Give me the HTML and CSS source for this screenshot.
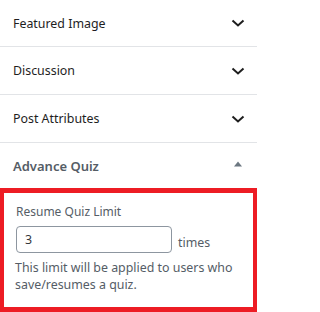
FILE: index.html
```html
<!DOCTYPE html>
<html>
<head>
<meta charset="utf-8">
<link rel="stylesheet" href="styles.css">
</head>
<body>
<div class="sidebar">
  <div class="panel first">
    <span class="title">Featured Image</span>
    <svg class="chev" width="14" height="8" viewBox="0 0 14 8"><path d="M1.5 1.5 L7 6.5 L12.5 1.5" fill="none" stroke="#1e1e1e" stroke-width="2"/></svg>
  </div>
  <div class="panel">
    <span class="title">Discussion</span>
    <svg class="chev" width="14" height="8" viewBox="0 0 14 8"><path d="M1.5 1.5 L7 6.5 L12.5 1.5" fill="none" stroke="#1e1e1e" stroke-width="2"/></svg>
  </div>
  <div class="panel">
    <span class="title">Post Attributes</span>
    <svg class="chev" width="14" height="8" viewBox="0 0 14 8"><path d="M1.5 1.5 L7 6.5 L12.5 1.5" fill="none" stroke="#1e1e1e" stroke-width="2"/></svg>
  </div>
  <div class="panel open">
    <span class="title quiz">Advance Quiz</span>
    <svg class="tri" width="8" height="6" viewBox="0 0 8 6"><path d="M0 5.5 L4 0.5 L8 5.5 Z" fill="#6c7781"/></svg>
  </div>
  <div class="box">
    <div class="label">Resume Quiz Limit</div>
    <div class="field">
      <input class="num" type="text" value="3">
      <span class="unit">times</span>
    </div>
    <p class="help">This limit will be applied to users who save/resumes a quiz.</p>
  </div>
</div>
</body>
</html>
```

FILE: styles.css
```css
html, body {
  margin: 0;
  padding: 0;
  background: #fff;
}
body {
  font-family: "Noto Sans", "Open Sans", sans-serif;
  font-size: 12.4px;
  width: 257px;
  height: 312px;
  overflow: hidden;
}
.sidebar {
  display: flex;
  flex-direction: column;
}
.panel {
  height: 47px;
  border-bottom: 1px solid #e2e4e7;
  display: flex;
  align-items: center;
  justify-content: space-between;
  padding: 0 12px 0 13px;
  flex-shrink: 0;
}
.panel.first {
  height: 46px;
}
.panel.open {
  border-bottom: none;
  height: 45px;
}
.title {
  color: #1e1e1e;
  font-size: 12.4px;
}
.title.quiz {
  color: #555d66;
  font-weight: 600;
  font-size: 13px;
}
.chev {
  display: block;
}
.tri {
  display: block;
  margin-right: 3px;
  margin-top: -4px;
}
.box {
  border: 5px solid #ed1c24;
  border-left-width: 4px;
  border-right-width: 4px;
  height: 124px;
  flex-shrink: 0;
  box-sizing: border-box;
  padding: 10px 10px 0 12px;
  color: #555d66;
}
.label {
  line-height: 18px;
  font-size: 12px;
}
.field {
  display: flex;
  align-items: flex-end;
  margin-top: 5px;
}
.num {
  width: 156px;
  height: 27px;
  box-sizing: border-box;
  border: 1px solid #8d96a0;
  border-radius: 4px;
  padding: 0 8px;
  font-family: inherit;
  font-size: 12.4px;
  color: #32373c;
  margin: 0;
  outline: none;
}
.unit {
  margin-left: 6px;
  line-height: 21px;
  color: #555d66;
}
.help {
  margin: 6px 0 0 -1px;
  line-height: 17px;
  color: #555d66;
}
```
